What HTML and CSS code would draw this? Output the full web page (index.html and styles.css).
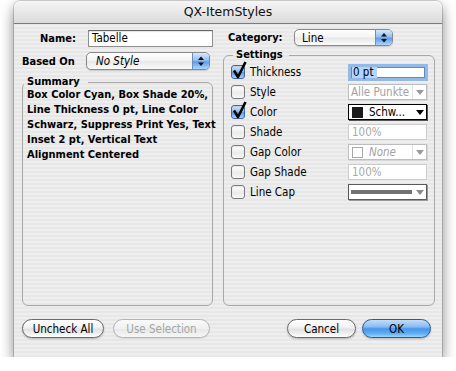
FILE: index.html
```html
<!DOCTYPE html>
<html>
<head>
<meta charset="utf-8">
<link rel="stylesheet" href="styles.css">
</head>
<body>
<div class="win">
  <div class="titlebar">QX-ItemStyles</div>
  <div class="content">
    <div class="main">
      <div class="col">
        <div class="row name-row">
          <span class="lbl name-lbl">Name:</span>
          <div class="field name-field">Tabelle</div>
        </div>
        <div class="row based-row">
          <span class="lbl based-lbl">Based On</span>
          <div class="popup based-pop">
            <span class="ptext it">No Style</span>
            <span class="pcap"><svg width="16" height="16" viewBox="0 0 16 16"><polygon points="5,7 8,3.5 11,7" fill="#111"/><polygon points="5,9.5 8,13 11,9.5" fill="#111"/></svg></span>
          </div>
        </div>
        <fieldset class="group summary">
          <legend class="leg leg-sum">Summary</legend>
          <div class="sumtext">Box Color Cyan, Box Shade 20%,<br>Line Thickness 0 pt, Line Color<br>Schwarz, Suppress Print Yes, Text<br>Inset 2 pt, Vertical Text<br>Alignment Centered</div>
        </fieldset>
      </div>
      <div class="col">
        <div class="row cat-row">
          <span class="lbl cat-lbl">Category:</span>
          <div class="popup cat-pop">
            <span class="ptext cat-text">Line</span>
            <span class="pcap"><svg width="16" height="15" viewBox="0 0 16 15"><polygon points="5,6.5 8,3 11,6.5" fill="#111"/><polygon points="5,9 8,12.5 11,9" fill="#111"/></svg></span>
          </div>
        </div>
        <fieldset class="group settings">
          <legend class="leg leg-set">Settings</legend>
          <div class="srow">
            <span class="cb on"><svg width="16" height="19" viewBox="0 0 16 19"><path d="M2 10.5 L6 17 L13.5 2" fill="none" stroke="#000" stroke-width="2.6" stroke-linejoin="round"/></svg></span>
            <span class="slabel">Thickness</span>
            <div class="ctrl tf focus"><span class="sel">0 pt</span></div>
          </div>
          <div class="srow">
            <span class="cb"></span>
            <span class="slabel">Style</span>
            <div class="ctrl sp dis"><span class="sptext">Alle Punkte</span><span class="arr"><i class="tri"></i></span></div>
          </div>
          <div class="srow">
            <span class="cb on"><svg width="16" height="19" viewBox="0 0 16 19"><path d="M2 10.5 L6 17 L13.5 2" fill="none" stroke="#000" stroke-width="2.6" stroke-linejoin="round"/></svg></span>
            <span class="slabel">Color</span>
            <div class="ctrl sp"><span class="sw black"></span><span class="sptext">Schw...</span><span class="arr"><i class="tri"></i></span></div>
          </div>
          <div class="srow">
            <span class="cb"></span>
            <span class="slabel">Shade</span>
            <div class="ctrl tf dis">100%</div>
          </div>
          <div class="srow">
            <span class="cb"></span>
            <span class="slabel">Gap Color</span>
            <div class="ctrl sp dis"><span class="sw white"></span><span class="sptext it">None</span><span class="arr"><i class="tri"></i></span></div>
          </div>
          <div class="srow">
            <span class="cb"></span>
            <span class="slabel">Gap Shade</span>
            <div class="ctrl tf dis">100%</div>
          </div>
          <div class="srow">
            <span class="cb"></span>
            <span class="slabel">Line Cap</span>
            <div class="ctrl sp cap"><span class="capline"></span><span class="arr"><i class="tri"></i></span></div>
          </div>
        </fieldset>
      </div>
    </div>
    <div class="buttons">
      <div class="btn b-uncheck">Uncheck All</div>
      <div class="btn b-use disabled">Use Selection</div>
      <div class="spacer"></div>
      <div class="btn b-cancel">Cancel</div>
      <div class="btn b-ok">OK</div>
    </div>
  </div>
</div>
</body>
</html>
```
FILE: styles.css
```css
body {
  margin: 0;
  background: #ffffff;
  font-family: "DejaVu Sans Condensed", "DejaVu Sans", sans-serif;
  font-size: 11.5px;
  color: #000;
}

.win {
  margin: 1px 0 0 14px;
  width: 428px;
  height: 356px;
  box-sizing: border-box;
  border-radius: 6px 6px 0 0;
  background: repeating-linear-gradient(180deg, #eeeeee 0 2px, #e7e7e7 2px 4px);
  box-shadow: 0 6px 14px rgba(0, 0, 0, 0.5), 0 0 0 1px rgba(0, 0, 0, 0.15);
  display: flex;
  flex-direction: column;
}

.titlebar {
  height: 22px;
  border-bottom: 1px solid #7b7b7b;
  border-radius: 6px 6px 0 0;
  background: linear-gradient(#f6f6f6, #dadada);
  text-align: center;
  font-family: "DejaVu Sans", sans-serif;
  font-size: 12.5px;
  line-height: 22px;
  color: #111;
}

.content {
  flex: 1;
  display: flex;
  flex-direction: column;
  padding: 5px 7px 0 8px;
}

.main {
  display: grid;
  grid-template-columns: 191px 212px;
  column-gap: 10px;
  height: 277px;
}

.col {
  display: flex;
  flex-direction: column;
  min-height: 0;
}

.row {
  display: flex;
  align-items: center;
}

.lbl {
  font-weight: bold;
  font-size: 11px;
}

.name-row {
  margin-top: 1px;
  height: 17px;
}

.name-lbl {
  width: 54px;
  text-align: right;
  margin-right: 12px;
}

.field {
  box-sizing: border-box;
  height: 17px;
  border: 1px solid #8e8e8e;
  border-top-color: #666;
  background: #fff;
  box-shadow: inset 0 1px 1px rgba(0, 0, 0, 0.12);
  padding-left: 3px;
  line-height: 15px;
}

.name-field {
  width: 125px;
}

.based-row {
  margin-top: 5px;
  height: 18px;
}

.based-lbl {
  width: 64px;
}

.popup {
  box-sizing: border-box;
  height: 18px;
  border: 1px solid #888;
  border-radius: 5px;
  background: linear-gradient(#ffffff, #f4f4f4 45%, #e8e8e8 55%, #fbfbfb);
  display: flex;
  align-items: center;
  box-shadow: 0 1px 1px rgba(0, 0, 0, 0.15);
}

.based-pop {
  width: 124px;
}

.ptext {
  flex: 1;
  padding-left: 9px;
}

.it {
  font-style: italic;
}

.pcap {
  width: 16px;
  align-self: stretch;
  border-radius: 0 4px 4px 0;
  border-left: 1px solid #6b8ec0;
  background: linear-gradient(#d6e8fc, #93c0f3 45%, #5f9de8 55%, #a9d6fc);
  display: flex;
  align-items: center;
  justify-content: center;
}

.cat-row {
  height: 17px;
}

.cat-lbl {
  width: 66px;
  margin-left: 5px;
}

.cat-pop {
  width: 99px;
  height: 17px;
}

.cat-text {
  padding-left: 7px;
}

.group {
  margin: 0;
  padding: 0;
  border: 1px solid #a8a8a8;
  border-radius: 6px;
  min-width: 0;
}

.leg {
  font-weight: bold;
  font-size: 11px;
  line-height: 10px;
  padding: 0 8px 0 3px;
  margin-left: 1px;
}

.summary {
  margin-top: 7px;
  flex: 1;
}

.sumtext {
  margin-top: 0;
  padding-left: 4px;
  font-weight: bold;
  font-size: 11px;
  line-height: 15px;
  white-space: nowrap;
}

.settings {
  margin-top: 4px;
  flex: 1;
  padding: 2px 6px 0 7px;
}

.leg-set {
  margin-left: 2px;
  padding-right: 6px;
}

.srow {
  height: 20px;
  display: flex;
  align-items: center;
}

.cb {
  width: 14px;
  height: 14px;
  box-sizing: border-box;
  border: 1px solid #7a7a7a;
  border-radius: 3px;
  background: linear-gradient(#fdfdfd, #ebebeb 60%, #f7f7f7);
  box-shadow: inset 0 1px 1px rgba(0, 0, 0, 0.08);
  position: relative;
  flex: none;
  margin-right: 5px;
}

.cb.on {
  background: linear-gradient(#d3e6fb, #90bff3 45%, #5c9ce8 55%, #aad5fb);
  border-color: #3f67a3;
}

.cb svg {
  position: absolute;
  left: 0px;
  top: -6px;
  overflow: visible;
}

.slabel {
  flex: 1;
}

.ctrl {
  width: 79px;
  height: 16px;
  box-sizing: border-box;
  flex: none;
  margin-right: 1px;
}

.tf {
  background: #fff;
  border: 1px solid #888;
  line-height: 14px;
  padding-left: 3px;
}

.tf.focus {
  width: 80px;
  height: 17px;
  margin-right: 0;
  border: 3px solid #93b9e6;
  box-shadow: inset 0 0 0 1px #6489c0;
  line-height: 11px;
  padding: 0 0 0 1px;
}

.sel {
  display: inline-block;
  background: #b5d5ff;
  padding: 0 3px 0 1px;
  line-height: 11px;
}

.tf.dis {
  border-color: #cdcdcd;
  color: #a9a9a9;
}

.sp {
  display: flex;
  align-items: center;
  background: #fff;
  border: 1px solid #000;
  box-shadow: 1px 1px 0 #555;
}

.sp.dis {
  border-color: #bdbdbd;
  box-shadow: 1px 1px 0 #d6d6d6;
  color: #a2a2a2;
}

.sptext {
  flex: 1;
  padding-left: 2px;
  white-space: nowrap;
  overflow: hidden;
}

.sw {
  width: 11px;
  height: 11px;
  box-sizing: border-box;
  margin-left: 3px;
  margin-right: 4px;
  flex: none;
}

.sw.black {
  background: #1a1a1a;
}

.sw.white {
  background: #fff;
  border: 1px solid #a8a8a8;
}

.arr {
  width: 13px;
  align-self: stretch;
  display: flex;
  align-items: center;
  justify-content: center;
  flex: none;
}

.sp.dis .arr {
  border-left: 1px solid #e2e2e2;
}

.tri {
  width: 0;
  height: 0;
  border-left: 4px solid transparent;
  border-right: 4px solid transparent;
  border-top: 5px solid #000;
}

.sp.dis .tri {
  border-top-color: #9a9a9a;
}

.sp.cap {
  border-color: #5a5a5a;
  box-shadow: 1px 1px 0 #9a9a9a;
}

.sp.cap .tri {
  border-top-color: #8a8a8a;
}

.capline {
  flex: 1;
  height: 4px;
  background: #727272;
  margin-left: 2px;
  margin-right: 1px;
}

.buttons {
  display: flex;
  margin-top: 13px;
  padding-right: 4px;
}

.spacer {
  flex: 1;
}

.btn {
  height: 19px;
  box-sizing: border-box;
  border: 1px solid #6a6a6a;
  border-radius: 10px;
  background: linear-gradient(#ffffff 0%, #f4f4f4 40%, #e2e2e2 55%, #f0f0f0 80%, #ffffff 100%);
  box-shadow: 0 1px 2px rgba(0, 0, 0, 0.25);
  display: flex;
  align-items: center;
  justify-content: center;
  font-size: 11.5px;
}

.b-uncheck {
  width: 82px;
}

.b-use {
  width: 97px;
  margin-left: 9px;
}

.btn.disabled {
  border-color: #b4b4b4;
  color: #a6a6a6;
  box-shadow: 0 1px 1px rgba(0, 0, 0, 0.08);
  background: linear-gradient(#fafafa, #f0f0f0 50%, #e8e8e8 55%, #f6f6f6);
}

.b-cancel {
  width: 69px;
}

.b-ok {
  width: 69px;
  margin-left: 6px;
  border-color: #2b5b9e;
  background: linear-gradient(#c4ddf8 0%, #86bdf3 40%, #4b94ea 52%, #5eaef5 80%, #9bd8ff 100%);
}
```
